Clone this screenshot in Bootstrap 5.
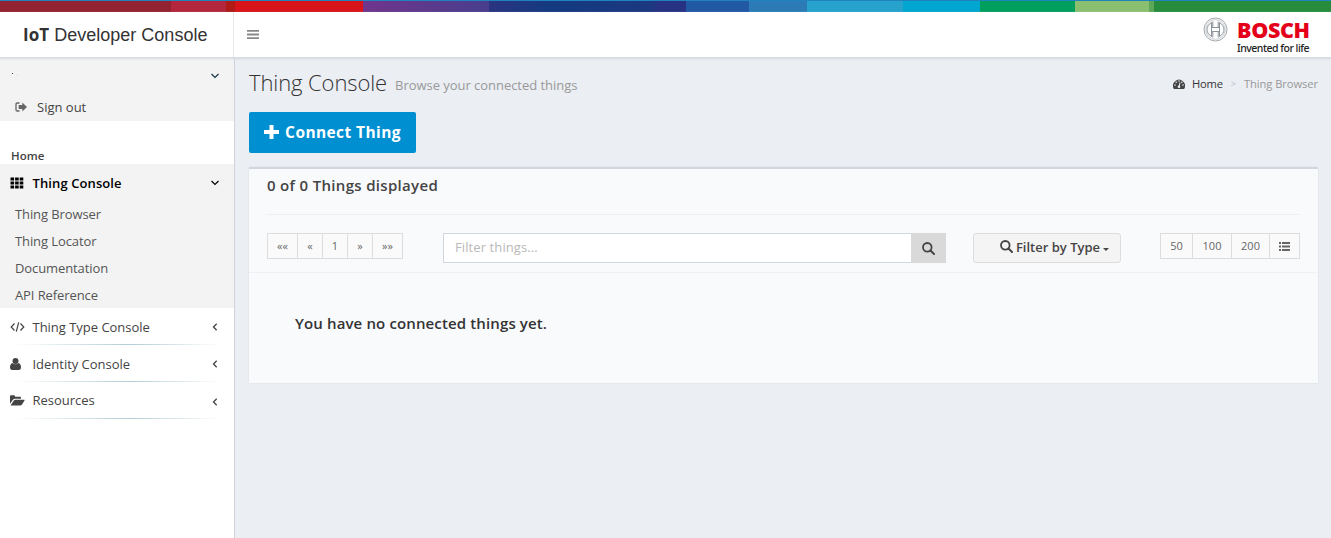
<!DOCTYPE html>
<html lang="en">
<head>
<meta charset="utf-8">
<meta name="viewport" content="width=device-width, initial-scale=1">
<title>IoT Developer Console</title>
<link href="https://cdn.jsdelivr.net/npm/bootstrap@5.3.0/dist/css/bootstrap.min.css" rel="stylesheet">
<style>
body{font-family:"Open Sans",sans-serif;font-size:13px;line-height:20px;color:#444;background:#ebeef3;height:538px;overflow:hidden}
a{color:inherit;text-decoration:none}
svg{display:block;flex:none;fill:currentColor}
.ribbon{height:12px;border-top:1px solid #2183bd;background:linear-gradient(90deg,#942331 171px,#b3263b 171px 226px,#b01a17 226px 235px,#d81419 235px 363px,#70358c 363px,#483e8d 489px,#2b3481 489px,#143a80 550px,#1b3880 650px,#283283 660px 686px,#2259a4 686px 749px,#2c7bb6 749px 807px,#26a2cd 807px 903px,#00a6cf 903px 980px,#009f5e 980px 1075px,#8abf70 1075px 1149px,#5da858 1149px 1154px,#278d3d 1154px)}
.topbar{height:46px;background:#fff;border-bottom:1px solid #d9dde2;box-shadow:0 1px 2px #d5d9e0;position:relative}
.brand{width:234px;border-right:1px solid #e7e7e7;font:18px/45px "Liberation Sans",sans-serif;color:#333;padding-left:23px;white-space:pre}
.brand b{font-family:"Open Sans",sans-serif;font-size:17px;letter-spacing:.1px}
.burger{color:#888;padding:17px 0 0 13px}
.logo{padding:4px 20px 0 0}
.logo-name{font-weight:800;font-size:21.5px;line-height:22px;letter-spacing:-.35px;color:#e50019;padding-top:3px}
.logo-tag{font:500 10.5px/10px "Noto Sans",sans-serif;color:#222;letter-spacing:-.5px;white-space:nowrap;padding-top:2px}
.sidebar{width:235px;height:480px;background:#fff;border-right:1px solid #cfd3de}
.shade{background:#f3f3f3}
.account{height:63px;padding:8px 15px 0 11px}
.signout{padding:11px 0 0 4px;gap:10px}
.side-home{height:43px;padding:25px 0 0 11px;font-weight:600;font-size:11.5px;line-height:20px}
.side-row{height:38px;padding:0 16px 0 10px;letter-spacing:-.02px}
.side-row .ico{width:22.5px}
.side-sub{height:27px;line-height:25px;padding-left:15px;color:#555;letter-spacing:-.1px}
.divided{height:37px;border-bottom:1px solid;border-image:linear-gradient(90deg,transparent 15px,#b3cdd6 130px,transparent 220px) 1}
.lowered{padding-top:2px}
.page{padding:12px 13px 0 14px}
.page-title{font-weight:300;font-size:22px;line-height:24px;letter-spacing:-.1px;color:#333;margin:0}
.page-note{color:#999;font-size:13px;padding-top:5px;margin-left:8px;letter-spacing:-.04px}
.crumbs{font-size:11.2px;line-height:16px;color:#999;padding-top:6px}
.connect{width:167px;height:41px;background:#0090d2;color:#fff;border-radius:2px;font-weight:700;font-size:15.5px;letter-spacing:.4px;margin-top:17px;gap:6px;padding-bottom:1px}
.panel-box{height:216px;margin-top:14px;background:#f9fafc;border-top:2px solid #d2d6de;border-radius:2px 2px 0 0;box-shadow:0 0 1px rgba(0,0,0,.25)}
.panel-title{height:46px;margin:0 18px;padding-top:5px;border-bottom:1px solid #edeff2;font-weight:600;font-size:15px;letter-spacing:.32px;line-height:22px}
.tools{height:58px;padding:18px 18px 0;border-bottom:1px solid #eff1f4}
.cells{height:26px;border:1px solid #ddd;background:#fafafa;font-size:11px;line-height:24px;color:#666;border-radius:0}
.cells>*{text-align:center;border-left:1px solid #ddd}
.cells>*:first-child{border:0}
.search-box{width:503px;height:30px;margin-left:40px}
.search-box .form-control{border:1px solid #d2d6de;border-right:0;border-radius:0;font-size:13px;padding:0 11px 2px;height:30px;min-height:0}
.search-box .form-control::placeholder{color:#b9b9b9;opacity:1;letter-spacing:.1px}
.find{width:35px;flex:none;background:#d9d9d9}
.type-filter{width:148px;height:30px;margin-left:27px;border:1px solid #ddd;background:#f4f4f4;border-radius:3px;font-weight:600;padding:0 0 2px 15px}
.caret-down{border:3px solid transparent;border-top-color:#444;border-bottom:0;margin:4px 0 0 3px}
.empty-note{font-weight:600;font-size:15px;letter-spacing:.13px;line-height:22px;color:#333;padding:39px 0 0 46px}
</style>
</head>
<body>
<svg width="0" height="0" class="position-absolute">
 <symbol id="down" viewBox="0 0 8 6"><path d="M.5 1 4 4.5 7.500 1" fill="none" stroke="currentColor" stroke-width="1.2"/></symbol>
 <symbol id="left" viewBox="0 0 6 8"><path d="M4.700.8 1.500 4l3.200 3.200" fill="none" stroke="currentColor" stroke-width="1.3"/></symbol>
 <symbol id="search" viewBox="0 0 13 13"><circle cx="5.300" cy="5.300" r="4.300" fill="none" stroke="currentColor" stroke-width="1.800"/><path d="m8.500 8.500 3.500 3.500" stroke="currentColor" stroke-width="2" stroke-linecap="round"/></symbol>
</svg>
<div class="ribbon"></div>
<header class="topbar d-flex">
 <a class="brand" href="#"><b>IoT</b> Developer Console</a>
 <a class="burger" href="#"><svg width="12" height="11"><path d="M0 1h12v1.800H0zM0 4.600h12v1.800H0zM0 8.200h12V10H0z"/></svg></a>
 <div class="logo d-flex ms-auto">
  <svg width="26" height="28" viewBox="0 0 26 28" fill="none" stroke="#8b9299"><circle cx="12.500" cy="13.500" r="11.500" fill="#f6f7f8" stroke="#a4a9ae"/><circle cx="12.500" cy="13.500" r="9.800" fill="#fff" stroke="#c3c7ca" stroke-width=".8"/><path d="M8.500 6.500v14c-6-3.500-6-10.500 0-14ZM16.500 6.500v14c6-3.500 6-10.500 0-14ZM8.500 11.500h8M8.500 15.500h8M9.800 5.500v5.500M15.200 5.500v5.500M9.800 16v5.500M15.200 16v5.500" fill="none"/></svg>
  <div style="width:74px;margin-left:8px"><div class="logo-name">BOSCH</div><div class="logo-tag">Invented for life</div></div>
 </div>
</header>
<div class="d-flex">
 <aside class="sidebar">
  <div class="account shade">
   <div class="d-flex justify-content-between" style="height:20px;padding-top:7px"><svg width="54" height="8"><path d="M1 0h1v1H1z" fill="#444"/><path d="M6 2h1v1H6zM52-1h1v1h-1z" fill="#d5d5d5"/></svg><svg width="8" height="6" color="#173746"><use href="#down"/></svg></div>
   <a class="signout d-flex align-items-center" href="#"><svg width="12" height="10" viewBox="0 0 12 10" color="#666"><path d="M4.500 1H2.300Q1 1 1 2.300v5.400Q1 9 2.300 9h2.200" fill="none" stroke="currentColor" stroke-width="1.300"/><path d="M7.300.5 12 5 7.300 9.500V7H3.700V3h3.600z"/></svg>Sign out</a>
  </div>
  <div class="side-home">Home</div>
  <nav class="shade" style="height:144px">
   <a class="side-row d-flex align-items-center fw-semibold text-black" style="letter-spacing:.1px;padding-right:15px" href="#"><span class="ico"><svg width="14" height="12"><path d="M.5.500h3.600v3H.5zM5.100.5h3.600v3H5.100zM9.700.5h3.600v3H9.700zM.5 4.500h3.600v3H.5zM5.100 4.500h3.600v3H5.100zM9.700 4.500h3.600v3H9.700zM.5 8.500h3.600v3H.5zM5.100 8.500h3.600v3H5.100zM9.700 8.500h3.600v3H9.700z"/></svg></span>Thing Console<svg class="ms-auto" width="8" height="6"><use href="#down"/></svg></a>
   <a class="side-sub d-block" href="#">Thing Browser</a><a class="side-sub d-block" href="#">Thing Locator</a><a class="side-sub d-block" href="#">Documentation</a><a class="side-sub d-block" href="#">API Reference</a>
  </nav>
  <a class="side-row divided lowered d-flex align-items-center" href="#"><span class="ico"><svg width="15" height="12" viewBox="0 0 15 12"><path d="M4.500 2.500 1.200 6l3.300 3.500M10.500 2.500 13.800 6l-3.300 3.500M8.700 1.300l-2.400 9.400" fill="none" stroke="currentColor" stroke-width="1.200"/></svg></span>Thing Type Console<svg class="ms-auto" width="6" height="8"><use href="#left"/></svg></a>
  <a class="side-row divided lowered d-flex align-items-center" href="#"><span class="ico"><svg width="11" height="12" viewBox="0 0 11 12"><circle cx="5.500" cy="3" r="3"/><path d="M2.500 5C1 5.300 0 7 0 9.600 0 11 .9 12 2.200 12h6.600c1.300 0 2.200-1 2.200-2.400C11 7 10 5.300 8.500 5q-3 2.500-6 0z"/></svg></span>Identity Console<svg class="ms-auto" width="6" height="8"><use href="#left"/></svg></a>
  <a class="side-row divided d-flex align-items-center" href="#"><span class="ico"><svg width="15" height="11" viewBox="0 0 15 11"><path d="M0 8.700V1.200Q0 .3 1 .3h3q1 0 1 1v.4h5q1 0 1 1v1H5.200q-1.500 0-2.500 1.300z"/><path d="M.5 10.500 3.500 6q.8-1.300 2-1.300h8.800q.7 0 .2.900l-2.500 3.800q-.8 1.100-2 1.100z"/></svg></span>Resources<svg class="ms-auto" style="margin-top:3px" width="6" height="8"><use href="#left"/></svg></a>
 </aside>
 <main class="page flex-grow-1">
  <div class="d-flex" style="height:25px">
   <h1 class="page-title">Thing Console</h1><span class="page-note">Browse your connected things</span>
   <div class="crumbs d-flex ms-auto"><svg width="12" height="10" viewBox="0 0 12 10" color="#444" style="margin:3px 7px 0 0"><path d="M.9 10A6 6 0 1 1 11.100 10z"/><g fill="#ebeef3"><circle cx="2" cy="6" r=".8"/><circle cx="3.200" cy="3.200" r=".8"/><circle cx="6" cy="2" r=".8"/><circle cx="8.800" cy="3.200" r=".8"/><circle cx="10" cy="6" r=".8"/></g><path d="M6 8 7 3.500" stroke="#ebeef3"/><circle cx="6" cy="7.800" r="1.300" fill="#ebeef3"/></svg><a href="#" style="color:#333;letter-spacing:-.2px">Home</a><span style="font-size:9px;color:#bbb;margin:0 8px">&gt;</span><span style="letter-spacing:-.08px">Thing Browser</span></div>
  </div>
  <a class="connect d-flex align-items-center justify-content-center" href="#"><svg width="15" height="14"><path d="M5.500 0h4v5H15v4H9.500v5h-4V9H0V5h5.500z"/></svg>Connect Thing</a>
  <section class="panel-box">
   <div class="panel-title">0 of 0 Things displayed</div>
   <div class="tools d-flex align-items-start">
    <div class="cells d-flex"><a href="#" style="width:29px">««</a><a href="#" style="width:25px">«</a><a href="#" style="width:25px">1</a><a href="#" style="width:25px">»</a><a href="#" style="width:30px">»»</a></div>
    <div class="search-box d-flex"><input class="form-control" placeholder="Filter things..." aria-label="Filter things"><button class="find btn border-0 rounded-0 p-0 d-flex align-items-center justify-content-center" aria-label="Search"><svg width="13" height="13" color="#444"><use href="#search"/></svg></button></div>
    <a class="type-filter d-flex align-items-center justify-content-center" href="#"><svg width="13" height="13" style="margin:-2px 3px 0 0"><use href="#search"/></svg>Filter by Type<span class="caret-down"></span></a>
    <div class="cells d-flex ms-auto"><a href="#" style="width:31px">50</a><a href="#" style="width:39px">100</a><a href="#" style="width:38px">200</a><a href="#" class="d-flex align-items-center justify-content-center" style="width:30px"><svg width="11" height="9"><path d="M0 0h2v2H0zM3 0h8v2H3zM0 3.500h2v2H0zM3 3.500h8v2H3zM0 7h2v2H0zM3 7h8v2H3z"/></svg></a></div>
   </div>
   <div class="empty-note">You have no connected things yet.</div>
  </section>
 </main>
</div>
<script src="https://cdn.jsdelivr.net/npm/bootstrap@5.3.0/dist/js/bootstrap.bundle.min.js"></script>
</body>
</html>
